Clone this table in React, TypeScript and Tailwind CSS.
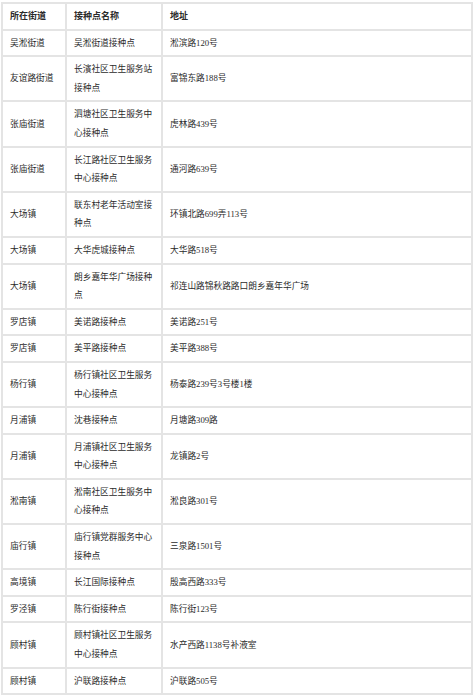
import React from "react";

const rows: [string, string, string][] = [
  ["吴淞街道", "吴淞街道接种点", "淞滨路120号"],
  ["友谊路街道", "长濱社区卫生服务站接种点", "富锦东路188号"],
  ["张庙街道", "泗塘社区卫生服务中心接种点", "虎林路439号"],
  ["张庙街道", "长江路社区卫生服务中心接种点", "通河路639号"],
  ["大场镇", "联东村老年活动室接种点", "环镇北路699弄113号"],
  ["大场镇", "大华虎城接种点", "大华路518号"],
  ["大场镇", "朗乡嘉年华广场接种点", "祁连山路锦秋路路口朗乡嘉年华广场"],
  ["罗店镇", "美诺路接种点", "美诺路251号"],
  ["罗店镇", "美平路接种点", "美平路388号"],
  ["杨行镇", "杨行镇社区卫生服务中心接种点", "杨泰路239号3号楼1楼"],
  ["月浦镇", "沈巷接种点", "月塘路309路"],
  ["月浦镇", "月浦镇社区卫生服务中心接种点", "龙镇路2号"],
  ["淞南镇", "淞南社区卫生服务中心接种点", "淞良路301号"],
  ["庙行镇", "庙行镇党群服务中心接种点", "三泉路1501号"],
  ["高境镇", "长江国际接种点", "殷高西路333号"],
  ["罗泾镇", "陈行街接种点", "陈行街123号"],
  ["顾村镇", "顾村镇社区卫生服务中心接种点", "水产西路1138号补液室"],
  ["顾村镇", "沪联路接种点", "沪联路505号"],
];

const td =
  "border-2 border-[#e4e4e4] py-[3px] pl-[7px] pr-[3px] align-middle leading-[18.6px]";

export default function App() {
  return (
    <div className="w-[474px] h-[697px] bg-white pt-[2px] pl-[1px]">
      <table
        className="table-fixed border-collapse w-[472px] text-[8.7px] text-[#2b2b2b]"
        style={{ fontFamily: '"Liberation Serif", "Noto Sans CJK SC", serif' }}
      >
        <colgroup>
          <col className="w-[64px]" />
          <col className="w-[96px]" />
          <col />
        </colgroup>
        <thead>
          <tr className="font-bold text-[9px]">
            <td className={td}>所在街道</td>
            <td className={td}>接种点名称</td>
            <td className={td}>地址</td>
          </tr>
        </thead>
        <tbody>
          {rows.map((r, i) => (
            <tr key={i}>
              <td className={td}>{r[0]}</td>
              <td className={td}>{r[1]}</td>
              <td className={td}>{r[2]}</td>
            </tr>
          ))}
        </tbody>
      </table>
    </div>
  );
}
